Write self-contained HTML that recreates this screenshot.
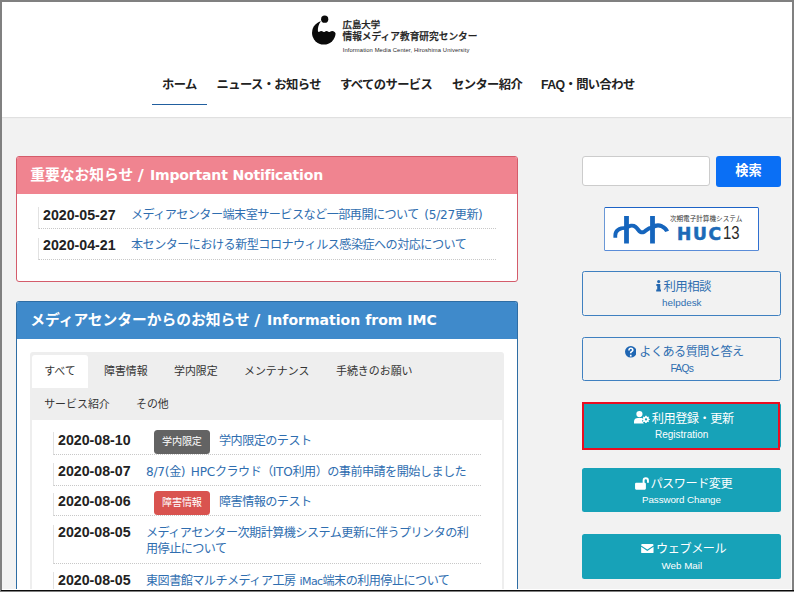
<!DOCTYPE html>
<html lang="ja">
<head>
<meta charset="utf-8">
<title>広島大学 情報メディア教育研究センター</title>
<style>
*{box-sizing:border-box;margin:0;padding:0}
html,body{width:794px;height:592px;overflow:hidden;background:#f2f2f2}
body{font-family:"Liberation Sans","Noto Sans CJK JP",sans-serif;color:#222;position:relative}
a{text-decoration:none;color:#2f6eb0}
#frame{position:absolute;left:0;top:0;width:794px;height:592px;overflow:hidden;background:#f2f2f2}
.abs{position:absolute}
/* header */
#hdr{position:absolute;left:0;top:0;width:794px;height:116.6px;background:#fff;box-shadow:0 0.6px 1.6px rgba(0,0,0,0.16)}
#logo{position:absolute;left:304px;top:8px}
.lg1{position:absolute;left:342.5px;top:18.6px;font-size:9.4px;line-height:12px;color:#222;white-space:nowrap;font-weight:500;-webkit-text-stroke:0.25px #222}
.lg2{position:absolute;left:342.5px;top:30.3px;font-size:9.7px;line-height:13px;color:#222;white-space:nowrap;font-weight:500;-webkit-text-stroke:0.25px #222}
.lg3{position:absolute;left:342.7px;top:47px;font-size:5.8px;line-height:7px;color:#2a2a2a;white-space:nowrap;font-family:"Liberation Sans",sans-serif;letter-spacing:0.115px}
.nav{position:absolute;top:76px;font-size:12.3px;line-height:18px;font-weight:700;color:#222;white-space:nowrap;letter-spacing:-0.6px}
#navline{position:absolute;left:152.3px;top:103.7px;width:54.7px;height:1.5px;background:#215f9f}
/* panels */
.panel{position:absolute;left:16px;width:502px;background:#fff;border:1px solid #d45c6b;border-radius:3px;overflow:hidden}
.ph{position:absolute;left:0;top:0;right:0;height:36.5px;color:#fff;font-weight:700;font-size:14.75px;line-height:36.2px;padding-left:13.2px;white-space:nowrap;letter-spacing:0}
.ph b{font-family:"DejaVu Sans","Liberation Sans",sans-serif;font-size:14.05px;letter-spacing:0;margin-left:2.6px}
.row{position:absolute;left:21px;width:458px;border-left:1px solid #e2e2e2;border-bottom:1px dotted #c8c8c8}
.dt{position:absolute;left:5px;font-weight:700;font-size:14.2px;color:#222;white-space:nowrap;letter-spacing:0}
.lk{position:absolute;font-family:"DejaVu Sans","Liberation Sans","Noto Sans CJK JP",sans-serif;font-size:12.1px;letter-spacing:-0.52px;color:#2f6eb0;white-space:nowrap;word-spacing:2px}
.l{letter-spacing:-0.25px}
.sl{font-size:16.5px;margin-left:-2.2px;margin-right:1.8px;position:relative;top:0.6px}
.tab{position:absolute;font-size:10.95px;color:#333;white-space:nowrap;line-height:16px}
.badge{position:absolute;height:23.4px;border-radius:3.5px;color:#fff;font-size:10.1px;line-height:23.4px;text-align:center;white-space:nowrap;letter-spacing:-0.2px}
/* right col */
.btn{position:absolute;border-radius:2.5px}
.ol{border:1.2px solid #3f80c0;background:#f2f2f2}
.tl{background:#17a2b8}
.bt1{position:absolute;font-size:12.2px;letter-spacing:-0.5px;line-height:16px;white-space:nowrap}
.bt2{position:absolute;font-size:9.8px;line-height:13px;white-space:nowrap;font-family:"Liberation Sans",sans-serif}
.blue{color:#2f6eb0}
.wh{color:#fff}
.bt1.wh{font-weight:400}
</style>
</head>
<body>
<div id="frame">

<div id="hdr">
  <svg id="logo" width="40" height="44" viewBox="0 0 40 44">
    <circle cx="19.8" cy="24.8" r="11.8" fill="#0a0a0a"/>
    <path d="M16.9 13.3 C14.7 16 13.6 19.800 13.900 22.900 Q14.300 24.300 15.300 23.800 Q17.200 22.300 19.200 23.800 Q20 24.400 20.800 23.800 Q22.400 22.300 24.400 23.800 Q25.200 24.400 26 23.800 Q28.400 22.100 30.600 24 L34 27.400 L36 8 L17 8 Z" fill="#fff"/>
    <circle cx="20.7" cy="11.15" r="3.6" fill="#0a0a0a"/>
  </svg>
  <div class="lg1">広島大学</div>
  <div class="lg2">情報メディア教育研究センター</div>
  <div class="lg3">Information Media Center, Hiroshima University</div>
  <a class="nav" style="left:162px">ホーム</a>
  <a class="nav" style="left:216.5px">ニュース・お知らせ</a>
  <a class="nav" style="left:340px">すべてのサービス</a>
  <a class="nav" style="left:452px">センター紹介</a>
  <a class="nav" style="left:541px">FAQ・問い合わせ</a>
  <div id="navline"></div>
</div>

<!-- important notification -->
<div class="panel" style="top:156px;height:126px;border-color:#d45c6b">
  <div class="ph" style="background:#f08490">重要なお知らせ <b style="letter-spacing:-0.19px"><span class="sl">/</span> Important Notification</b></div>
  <div class="row" style="top:50px;height:21.8px"></div>
  <div class="dt" style="left:26px;top:49.5px;line-height:16px">2020-05-27</div>
  <a class="lk" style="left:114px;top:49.5px;line-height:17px">メディアセンター端末室サービスなど一部再開について <span class="l">(5/27</span>更新<span class="l">)</span></a>
  <div class="row" style="top:80.5px;height:22.4px"></div>
  <div class="dt" style="left:26px;top:79.5px;line-height:16px">2020-04-21</div>
  <a class="lk" style="left:114px;top:79.5px;line-height:17px">本センターにおける新型コロナウィルス感染症への対応について</a>
</div>

<!-- information from IMC -->
<div class="panel" style="top:301px;height:300px;border-color:#2e6da4;border-bottom:none">
  <div class="ph" style="background:#3f8acb">メディアセンターからのお知らせ <b><span class="sl">/</span> Information from IMC</b></div>
  <div class="abs" style="left:13px;top:50px;width:474px;height:261px;background:#eee;border-radius:3px"></div>
  <div class="abs" style="left:15.3px;top:52.6px;width:55.8px;height:33.4px;background:#fff;border-radius:3px 3px 0 0"></div>
  <div class="tab" style="left:27.2px;top:61px">すべて</div>
  <div class="tab" style="left:87px;top:61px">障害情報</div>
  <div class="tab" style="left:157px;top:61px">学内限定</div>
  <div class="tab" style="left:227px;top:61px">メンテナンス</div>
  <div class="tab" style="left:319px;top:61px">手続きのお願い</div>
  <div class="tab" style="left:27.2px;top:94px">サービス紹介</div>
  <div class="tab" style="left:119px;top:94px">その他</div>
  <div class="abs" style="left:15.3px;top:118.3px;width:469.7px;height:200px;background:#fff"></div>

  <div class="row" style="left:36px;width:427.5px;top:129.6px;height:23.4px"></div>
  <div class="dt" style="left:41px;top:130px;line-height:16px">2020-08-10</div>
  <div class="badge" style="left:137px;top:128.2px;width:55.8px;background:#636363">学内限定</div>
  <a class="lk" style="left:202px;top:130.6px;line-height:17px">学内限定のテスト</a>

  <div class="row" style="left:36px;width:427.5px;top:161px;height:22.5px"></div>
  <div class="dt" style="left:41px;top:161px;line-height:16px">2020-08-07</div>
  <a class="lk" style="left:129px;top:161.5px;line-height:17px"><span class="l">8/7(</span>金<span class="l">) HPC</span>クラウド（<span class="l">ITO</span>利用）の事前申請を開始しました</a>

  <div class="row" style="left:36px;width:427.5px;top:191.3px;height:23px"></div>
  <div class="dt" style="left:41px;top:191px;line-height:16px">2020-08-06</div>
  <div class="badge" style="left:137px;top:189.4px;width:55.8px;background:#d9534f">障害情報</div>
  <a class="lk" style="left:202px;top:191.6px;line-height:17px">障害情報のテスト</a>

  <div class="row" style="left:36px;width:427.5px;top:222.7px;height:39.3px"></div>
  <div class="dt" style="left:41px;top:222px;line-height:16px">2020-08-05</div>
  <a class="lk" style="left:129px;top:222.8px;line-height:16.4px">メディアセンター次期計算機システム更新に伴うプリンタの利<br>用停止について</a>

  <div class="row" style="left:36px;width:427.5px;top:269.7px;height:39px"></div>
  <div class="dt" style="left:41px;top:270px;line-height:16px">2020-08-05</div>
  <a class="lk" style="left:129px;top:270.5px;line-height:17px;word-spacing:0.6px">東図書館マルチメディア工房 <span style="letter-spacing:-0.6px;font-size:11px">iMac</span>端末の利用停止について</a>
</div>

<!-- right column -->
<input type="text" aria-label="search" class="abs" style="left:582px;top:156px;width:128px;height:30px;background:#fff;border:1px solid #ccc;border-radius:3px;outline:none;font-size:12px;padding:0 6px">
<button type="button" class="abs" style="border:none;padding:0;font-family:inherit;left:716px;top:156px;width:65px;height:30.5px;background:#0a6ff5;border-radius:3px;color:#fff;font-weight:700;font-size:13.2px;line-height:30px;text-align:center">検索</button>

<div class="abs" style="left:604.1px;top:206.8px;width:155.1px;height:44.3px;background:#fff;border:1.5px solid #3b78d4;border-color:#1d63c6 #2f6fd0 #5a8cd8 #6a98d6;border-radius:1.5px"></div>
<svg class="abs" style="left:604px;top:206px" width="80" height="46" viewBox="604 206 80 46">
  <g fill="none" stroke="#1565bd" stroke-linecap="butt" stroke-linejoin="round">
    <path stroke-width="4.800" d="M626.5 216 V243.5 M652.5 216 V243.5"/>
    <path stroke-width="3.800" d="M615.300 237.800 V235.500 C615.300 230.500 619.500 227.800 626.500 227.800"/>
    <path stroke-width="4" d="M626.500 227.800 C629 225.700 633 225 635.500 226.800 C637.600 228.300 638.600 231 640.400 231.900 C641.500 232.400 642.800 232.400 644 231.900 C646 230.900 647.500 227.600 652.500 227.400"/>
    <path stroke-width="4" d="M652.500 227.400 C655 225.500 659 225 661.700 226.200 C664.600 227.600 666.400 229.300 667.100 231.400"/>
  </g>
</svg>
<div class="abs" style="left:669.9px;top:214.2px;font-size:6.6px;line-height:9px;color:#333;white-space:nowrap;letter-spacing:0">次期電子計算機システム</div>
<div class="abs" style="left:676.9px;top:223.300px;font-family:'DejaVu Sans','Liberation Sans',sans-serif;font-size:17.1px;line-height:22px;font-weight:700;color:#1c6ab7;-webkit-text-stroke:0.55px #1c6ab7;white-space:nowrap;letter-spacing:1.7px">HUC</div>
<div class="abs" style="left:722.6px;top:222.4px;font-size:17.6px;line-height:22px;color:#2a2a2a;white-space:nowrap;transform:scaleX(0.85);transform-origin:0 0">13</div>

<!-- helpdesk -->
<div class="btn ol" style="left:582px;top:271px;width:199px;height:44.8px"></div>
<svg class="abs" style="left:655.9px;top:280.2px" width="5.4" height="11.6" viewBox="0 0 6 14"><circle cx="3" cy="1.900" r="1.900" fill="#2568b0"/><path fill="#2568b0" d="M0.200 4.800h4.700v6.800H6V14H0v-2.400h1.200V7.200H0.200z"/></svg>
<div class="bt1 blue" style="left:663.4px;top:278.5px;font-size:12.4px">利用相談</div>
<div class="bt2 blue" style="left:662px;top:296px;font-size:9.9px">helpdesk</div>

<!-- FAQs -->
<div class="btn ol" style="left:582px;top:336.5px;width:199px;height:44.6px"></div>
<svg class="abs" style="left:624.6px;top:346.4px" width="11.6" height="11.600" viewBox="0 0 16 16"><circle cx="8" cy="8" r="8" fill="#1f66b3"/><path fill="#fff" transform="translate(8 8.200) scale(1.2) translate(-8 -8)" d="M5 6.200c0-2 1.400-3.200 3.100-3.200 1.800 0 3.100 1.100 3.100 2.700 0 1.300-.8 1.900-1.600 2.400-.6.400-.8.700-.8 1.500H7c0-1.400.4-2 1.300-2.600.6-.4 1-.700 1-1.300 0-.6-.5-1-1.200-1-.8 0-1.300.5-1.300 1.500zM7 11.200h1.900v1.900H7z"/></svg>
<div class="bt1 blue" style="left:639.3px;top:344px;font-size:12.1px">よくある質問と答え</div>
<div class="bt2 blue" style="left:670.4px;top:361.6px;font-size:10.3px;letter-spacing:-0.75px">FAQs</div>

<!-- Registration (highlighted) -->
<div class="btn tl" style="left:582.3px;top:403px;width:199px;height:45.4px"></div>
<div class="abs" style="left:582.1px;top:401.8px;width:198.1px;height:48.2px;border:2.9px solid #ea0d20"></div>
<svg class="abs" style="left:634px;top:411.4px" width="15.5" height="12.4" viewBox="0 0 20 16"><g fill="#fff"><circle cx="7" cy="4" r="4"/><path d="M0 16v-2.500C0 10.500 2.300 9 5 9h4c.9 0 1.700.2 2.400.5-.9 1.300-1 3.100-.3 4.500.4.800.9 1.500 1.600 2z"/><path d="M15.500 6.800l.9.100.3 1.200 1 .5 1.100-.6.900.9-.6 1.100.5 1 1.200.3v1.400l-1.200.3-.5 1 .6 1.100-.9.900-1.100-.6-1 .5-.3 1.200h-1.800l-.3-1.200-1-.5-1.100.6-.9-.9.6-1.100-.5-1-1.200-.3v-1.400l1.200-.3.5-1-.6-1.100.9-.9 1.100.6 1-.5.300-1.200z" transform="translate(0.99 -0.31) scale(0.93)"/></g><circle cx="15.500" cy="10.900" r="1.500" fill="#17a2b8"/></svg>
<div class="bt1 wh" style="left:651.8px;top:410.6px">利用登録・更新</div>
<div class="bt2 wh" style="left:655px;top:427.7px;font-size:10px">Registration</div>

<!-- Password -->
<div class="btn tl" style="left:582.3px;top:468px;width:198.7px;height:44.4px"></div>
<svg class="abs" style="left:635px;top:477px" width="16" height="14" viewBox="0 0 16 14"><rect x="0.050" y="5.800" width="10.850" height="6.850" rx="1.100" fill="#fff"/><path fill="none" stroke="#fff" stroke-width="1.900" d="M8.600 6.200V3.450a2.180 2.180 0 0 1 4.360 0V5.800"/></svg>
<div class="bt1 wh" style="left:650.4px;top:476px">パスワード変更</div>
<div class="bt2 wh" style="left:642px;top:492.6px;letter-spacing:-0.08px">Password Change</div>

<!-- Web Mail -->
<div class="btn tl" style="left:582.3px;top:533.9px;width:198.7px;height:44.9px"></div>
<svg class="abs" style="left:641.1px;top:544.1px" width="12.7" height="9.300" viewBox="0 0 16 12"><path fill="#fff" d="M0 1.500A1.500 1.500 0 0 1 1.500 0h13A1.500 1.500 0 0 1 16 1.500v.5L8 7.200 0 2zM0 3.700l8 5.200 8-5.200v6.800a1.500 1.500 0 0 1-1.500 1.500h-13A1.500 1.500 0 0 1 0 10.500z"/></svg>
<div class="bt1 wh" style="left:656.1px;top:541.4px">ウェブメール</div>
<div class="bt2 wh" style="left:661.5px;top:559px">Web Mail</div>

<!-- screenshot frame border -->
<div class="abs" style="left:0;top:0;width:794px;height:1.8px;background:#808080"></div>
<div class="abs" style="left:0;top:0;width:1.8px;height:592px;background:#808080"></div>
<div class="abs" style="left:792.1px;top:0;width:1.9px;height:592px;background:#808080"></div>
<div class="abs" style="left:1.8px;top:588.7px;width:790.4px;height:1.2px;background:#fff"></div>
<div class="abs" style="left:791.2px;top:117px;width:1px;height:472px;background:#fbfbfb"></div>
<div class="abs" style="left:1px;top:589.8px;width:793px;height:1.3px;background:#0a0a0a"></div>
<div class="abs" style="left:0;top:591px;width:794px;height:1px;background:#808080"></div>
</div>
</body>
</html>
